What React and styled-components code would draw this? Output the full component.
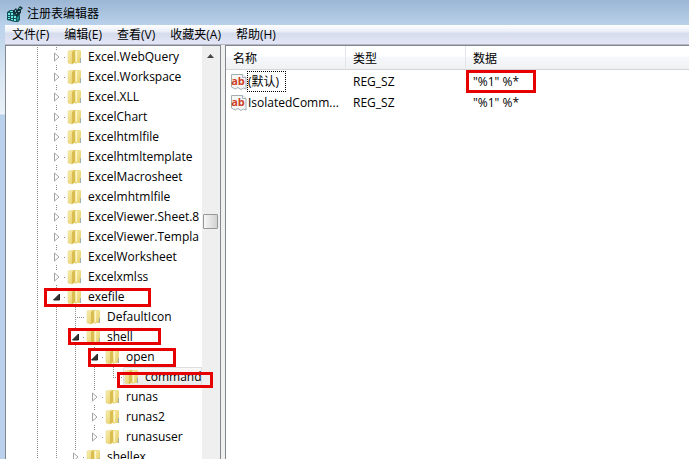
import { useState } from "react";
import styled, { createGlobalStyle } from "styled-components";

const menus = ["文件(F)", "编辑(E)", "查看(V)", "收藏夹(A)", "帮助(H)"];

// guides: one letter for each indent column in front of the folder
// l = line going through, t = line with a branch, e = last branch
const keys = [
  { name: "Excel.WebQuery", guides: "lt", state: "closed" },
  { name: "Excel.Workspace", guides: "lt", state: "closed" },
  { name: "Excel.XLL", guides: "lt", state: "closed" },
  { name: "ExcelChart", guides: "lt", state: "closed" },
  { name: "Excelhtmlfile", guides: "lt", state: "closed" },
  { name: "Excelhtmltemplate", guides: "lt", state: "closed" },
  { name: "ExcelMacrosheet", guides: "lt", state: "closed" },
  { name: "excelmhtmlfile", guides: "lt", state: "closed" },
  { name: "ExcelViewer.Sheet.8", guides: "lt", state: "closed" },
  { name: "ExcelViewer.Templa", guides: "lt", state: "closed" },
  { name: "ExcelWorksheet", guides: "lt", state: "closed" },
  { name: "Excelxmlss", guides: "lt", state: "closed" },
  { name: "exefile", guides: "lt", state: "open", mark: [38, 1, 107, 19] },
  { name: "DefaultIcon", guides: "llt" },
  { name: "shell", guides: "llt", state: "open", mark: [62, 1, 93, 17] },
  { name: "open", guides: "lllt", state: "open", mark: [82, 1, 88, 19] },
  { name: "command", guides: "lllle", mark: [111, 5, 96, 16] },
  { name: "runas", guides: "lllt", state: "closed" },
  { name: "runas2", guides: "lllt", state: "closed" },
  { name: "runasuser", guides: "llle", state: "closed" },
  { name: "shellex", guides: "llt", state: "closed" },
];

const values = [
  { name: "(默认)", type: "REG_SZ", data: '"%1" %*', marked: true },
  { name: "IsolatedComm...", type: "REG_SZ", data: '"%1" %*' },
];

function FolderIcon() {
  return (
    <Icon width="15" height="16" viewBox="0 0 15 16" aria-hidden="true">
      <defs>
        <linearGradient id="folder" x1="0" x2="1" y1="0" y2="1">
          <stop offset="0" stopColor="#f9f1b4" />
          <stop offset="1" stopColor="#e5cc62" />
        </linearGradient>
      </defs>
      <path d="M6 1h7l1 1v12H6z" fill="#ecd980" />
      <path d="M1 2l6-1v13l-2 1-4-1z" fill="url(#folder)" stroke="#e6d382" strokeWidth=".5" />
      <path d="M8 2l5-1v12l-5 2z" fill="url(#folder)" />
      <path d="M5 3l3-2v12l-3 2z" fill="#d9bd50" />
      <path d="M9 2h1v11H9z" fill="#fbf5c8" />
      <path d="M13 9h1v5h-1z" fill="#9db0ae" />
    </Icon>
  );
}

function StringIcon() {
  return (
    <Icon width="16" height="18" viewBox="0 0 16 18" aria-hidden="true">
      <path
        d="M.5 1.5h11l3.500 3v11.500l-2.500-1-2.500 1.500-3-2-3 1.500-3.500-2z"
        fill="#f5f7f7"
        stroke="#a3adb2"
      />
      <path d="M11.500 1.500v3H15" fill="#fff" stroke="#a3adb2" />
      <text x="7" y="12" textAnchor="middle" fontSize="11" fontWeight="700" fontFamily="Open Sans, sans-serif" fill="#cf3f27">
        ab
      </text>
    </Icon>
  );
}

function RegistryIcon() {
  return (
    <Icon width="16" height="16" viewBox="0 0 16 16" aria-hidden="true">
      <path d="M0 6l3-2h8l2 2v8l-2 2H8l-8-2z" fill="#14545a" />
      <path
        d="M1 7h2v2H1zM4 7h2v2H4zM1 10h2v1H1zM4 10h2v2H4zM7 10h2v2H7zM1 12h2v1H1zM4 13h2v1H4zM7 13h2v2H7zM3 5h3v1H3z"
        fill="#6fe6e0"
      />
      <path d="M10 10l2-1v4l-2 2z" fill="#1f8d92" />
      <path d="M6 5l3-3 1 2 3-4 3 2-2 2v3l-2 1-1 3-2-1-1-3-2 1z" fill="#142f35" />
      <path d="M8 4h1v2H8zM12 2h2v1h-2zM11 5h2v1h-2zM9 7h1v1H9z" fill="#5fb5bd" />
    </Icon>
  );
}

function TreeRow({ item, selected, onSelect }) {
  const [open, setOpen] = useState(item.state === "open");
  return (
    <Row role="treeitem" aria-selected={selected}>
      {item.guides.split("").map((kind, i) => (
        <Guide key={i} $kind={kind}>
          {item.state && i === item.guides.length - 1 && (
            <Expander aria-label={"展开 " + item.name} onClick={() => setOpen(!open)}>
              <svg width="8" height="10" viewBox="0 0 8 10">
                {open ? (
                  <path d="M6.500 2v6h-6z" fill="#333" stroke="#222" />
                ) : (
                  <path d="M1.500 1v8l4.500-4z" fill="#fff" stroke="#a3a3a3" />
                )}
              </svg>
            </Expander>
          )}
        </Guide>
      ))}
      <Key $selected={selected} onClick={onSelect}>
        <FolderIcon />
        <KeyName>{item.name}</KeyName>
      </Key>
      {item.mark && <Mark $box={item.mark} />}
    </Row>
  );
}

export default function App() {
  const [selected, setSelected] = useState("command");
  return (
    <Frame>
      <GlobalStyle />
      <TitleBar>
        <RegistryIcon />
        <Title>注册表编辑器</Title>
      </TitleBar>
      <Client>
        <MenuBar>
          {menus.map((menu) => (
            <MenuButton key={menu}>{menu}</MenuButton>
          ))}
        </MenuBar>
        <Panes>
          <TreePane>
            <Tree role="tree">
              {keys.map((item) => (
                <TreeRow
                  key={item.name}
                  item={item}
                  selected={item.name === selected}
                  onSelect={() => setSelected(item.name)}
                />
              ))}
            </Tree>
            <ScrollBar>
              <ScrollButton aria-label="向上滚动">
                <svg width="7" height="4" viewBox="0 0 7 4">
                  <path d="M0 4l3.500-4L7 4z" fill="#444" />
                </svg>
              </ScrollButton>
              <ScrollSpace />
              <Thumb aria-label="滚动块" />
            </ScrollBar>
          </TreePane>
          <ListPane>
            <Table>
              <thead>
                <tr>
                  <Head $width="120px">名称</Head>
                  <Head $width="120px">类型</Head>
                  <Head>数据</Head>
                </tr>
              </thead>
              <tbody>
                <SpacerRow />
                {values.map((value) => (
                  <tr key={value.name}>
                    <NameCell>
                      <NameBox>
                        <StringIcon />
                        <ValueName $focused={value.marked}>{value.name}</ValueName>
                      </NameBox>
                    </NameCell>
                    <Cell>{value.type}</Cell>
                    <Cell>
                      {value.data}
                      {value.marked && <Mark $box={[0, -1, 70, 23]} />}
                    </Cell>
                  </tr>
                ))}
              </tbody>
            </Table>
          </ListPane>
        </Panes>
      </Client>
    </Frame>
  );
}

const GlobalStyle = createGlobalStyle`
  * {
    box-sizing: border-box;
  }

  body {
    margin: 0;
    overflow: hidden;
    color: #000;
    font: 12px/20px "Open Sans", "Noto Sans CJK SC", sans-serif;
  }

  button {
    padding: 0;
    border: 0;
    background: none;
    color: inherit;
    font: inherit;
  }
`;

const Frame = styled.div`
  height: 100vh;
  display: flex;
  flex-direction: column;
  background: linear-gradient(#9bb6d4, #b9d1ea 25px, #dce8f4 80px, #eaf1f8 114px, #b9d1ea 115px);
`;

const TitleBar = styled.header`
  height: 25px;
  flex: none;
  display: flex;
  align-items: center;
  gap: 4px;
  padding: 2px 7px 0;
`;

const Title = styled.h1`
  margin: 0;
  font-size: 12px;
  font-weight: 400;
`;

const Client = styled.div`
  flex: 1;
  min-height: 0;
  margin-left: 5px;
  display: flex;
  flex-direction: column;
  background: #f0f0f0;
`;

const MenuBar = styled.nav`
  height: 20px;
  flex: none;
  display: flex;
  gap: 15px;
  padding-left: 7px;
  background: linear-gradient(#fff, #e8edf6 7px, #d5dcec 8px, #e1e4f4 17px, #e1e4f4);
  border-bottom: 1px solid #b4b6c6;
`;

const MenuButton = styled.button`
  line-height: 19px;
  white-space: nowrap;
`;

const Panes = styled.main`
  flex: 1;
  min-height: 0;
  display: flex;
  gap: 4px;
`;

const TreePane = styled.section`
  width: 216px;
  flex: none;
  display: flex;
  overflow: hidden;
  background: #fff;
  border: 1px solid #828790;
  border-bottom: 0;
`;

const Tree = styled.ul`
  flex: 1;
  min-width: 0;
  margin: 0;
  padding: 1px 0 0;
  list-style: none;
`;

const Row = styled.li`
  position: relative;
  height: 20px;
  display: flex;
  padding-left: 22px;
`;

const dots = "repeating-linear-gradient(#8c8c8c 0 1px, transparent 1px 2px)";
const dotsAcross = "repeating-linear-gradient(90deg, #8c8c8c 0 1px, transparent 1px 2px)";

const Guide = styled.span`
  width: 19px;
  flex: none;
  display: flex;
  align-items: center;
  justify-content: center;
  background-image: ${dots}, ${dotsAcross};
  background-repeat: no-repeat;
  background-position: 9px 0, 9px 10px;
  background-size: 
    1px ${(props) => (props.$kind === "e" ? "10px" : "100%")},
    ${(props) => (props.$kind === "l" ? "0 0" : "10px 1px")};
`;

const Expander = styled.button`
  width: 12px;
  height: 14px;
  display: grid;
  place-items: center;
  background: #fff;
`;

const Key = styled.button`
  flex: 1;
  min-width: 0;
  display: flex;
  align-items: center;
  gap: 6px;
  padding-left: 1px;
  border-radius: 2px 0 0 2px;
  background: ${(props) => (props.$selected ? "linear-gradient(#fafafa, #e8e8e8)" : "none")};
  box-shadow: ${(props) => (props.$selected ? "inset 0 0 0 1px #dedede" : "none")};
`;

const KeyName = styled.span`
  white-space: nowrap;
`;

const Icon = styled.svg`
  flex: none;
  display: block;
`;

// red frame drawn over a row, $box is left, top, width, height
const Mark = styled.span`
  position: absolute;
  z-index: 1;
  left: ${(props) => props.$box[0]}px;
  top: ${(props) => props.$box[1]}px;
  width: ${(props) => props.$box[2]}px;
  height: ${(props) => props.$box[3]}px;
  border: 3px solid #e60000;
  pointer-events: none;
`;

const ScrollBar = styled.div`
  width: 18px;
  flex: none;
  display: flex;
  flex-direction: column;
  padding: 0 2px 0 1px;
  background: #efefef;
`;

const ScrollButton = styled.button`
  height: 19px;
  display: grid;
  place-items: center;
`;

const ScrollSpace = styled.div`
  flex: 0 0 36%;
`;

const Thumb = styled.button`
  height: 15px;
  border: 1px solid #979797;
  border-radius: 1px;
  background: linear-gradient(90deg, #f6f6f6, #d2d2d2);
`;

const ListPane = styled.section`
  flex: 1;
  min-width: 0;
  overflow: hidden;
  background: #fff;
  border-top: 1px solid #828790;
  border-left: 1px solid #828790;
`;

const Table = styled.table`
  width: 100%;
  table-layout: fixed;
  border-spacing: 0;
`;

const Head = styled.th`
  width: ${(props) => props.$width || "auto"};
  height: 24px;
  padding: 2px 0 0 7px;
  background: linear-gradient(#fff 10px, #f5f8fb 11px, #f0f1f2);
  border-bottom: 1px solid #d5d5d5;
  border-right: ${(props) => (props.$width ? "1px solid #e2e5ea" : "0")};
  font-weight: 400;
  text-align: left;
`;

const SpacerRow = styled.tr`
  height: 1px;
`;

const Cell = styled.td`
  position: relative;
  height: 21px;
  padding: 0 0 0 7px;
  font-size: 12px;
  white-space: nowrap;
`;

const NameCell = styled(Cell)`
  padding-left: 5px;
`;

const NameBox = styled.div`
  display: flex;
  align-items: center;
`;

const ValueName = styled.span`
  height: 21px;
  padding-right: 6px;
  border: 1px dotted ${(props) => (props.$focused ? "#000" : "transparent")};
`;
